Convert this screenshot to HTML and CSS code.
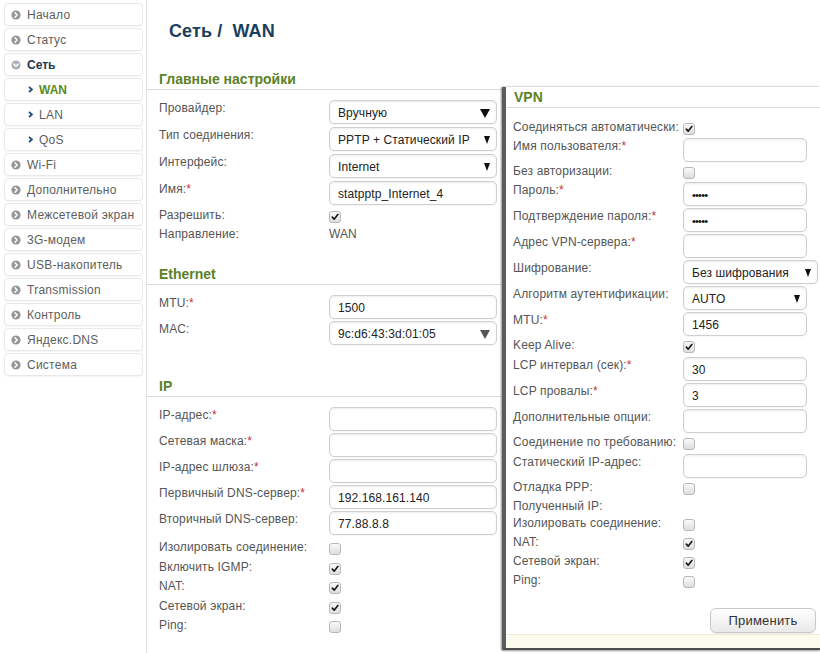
FILE: index.html
```html
<!DOCTYPE html>
<html lang="ru">
<head>
<meta charset="utf-8">
<title>Сеть / WAN</title>
<link rel="stylesheet" href="styles.css">
</head>
<body>
<div class="page">
  <nav class="sidebar">
    <div class="nav-item"><svg class="bul" viewBox="0 0 10 10"><circle cx="5" cy="5" r="4.6"/><path d="M4 2.7 6.2 5 4 7.3"/></svg><span>Начало</span></div>
    <div class="nav-item"><svg class="bul" viewBox="0 0 10 10"><circle cx="5" cy="5" r="4.6"/><path d="M4 2.7 6.2 5 4 7.3"/></svg><span>Статус</span></div>
    <div class="nav-item open"><svg class="bul" viewBox="0 0 10 10"><circle cx="5" cy="5" r="4.6"/><path d="M2.7 4 5 6.2 7.3 4"/></svg><span>Сеть</span></div>
    <div class="nav-item sub active"><svg class="chev" viewBox="0 0 5 7"><path d="M1 1 4 3.5 1 6"/></svg><span>WAN</span></div>
    <div class="nav-item sub"><svg class="chev" viewBox="0 0 5 7"><path d="M1 1 4 3.5 1 6"/></svg><span>LAN</span></div>
    <div class="nav-item sub"><svg class="chev" viewBox="0 0 5 7"><path d="M1 1 4 3.5 1 6"/></svg><span>QoS</span></div>
    <div class="nav-item"><svg class="bul" viewBox="0 0 10 10"><circle cx="5" cy="5" r="4.6"/><path d="M4 2.7 6.2 5 4 7.3"/></svg><span>Wi-Fi</span></div>
    <div class="nav-item"><svg class="bul" viewBox="0 0 10 10"><circle cx="5" cy="5" r="4.6"/><path d="M4 2.7 6.2 5 4 7.3"/></svg><span>Дополнительно</span></div>
    <div class="nav-item"><svg class="bul" viewBox="0 0 10 10"><circle cx="5" cy="5" r="4.6"/><path d="M4 2.7 6.2 5 4 7.3"/></svg><span>Межсетевой экран</span></div>
    <div class="nav-item"><svg class="bul" viewBox="0 0 10 10"><circle cx="5" cy="5" r="4.6"/><path d="M4 2.7 6.2 5 4 7.3"/></svg><span>3G-модем</span></div>
    <div class="nav-item"><svg class="bul" viewBox="0 0 10 10"><circle cx="5" cy="5" r="4.6"/><path d="M4 2.7 6.2 5 4 7.3"/></svg><span>USB-накопитель</span></div>
    <div class="nav-item"><svg class="bul" viewBox="0 0 10 10"><circle cx="5" cy="5" r="4.6"/><path d="M4 2.7 6.2 5 4 7.3"/></svg><span>Transmission</span></div>
    <div class="nav-item"><svg class="bul" viewBox="0 0 10 10"><circle cx="5" cy="5" r="4.6"/><path d="M4 2.7 6.2 5 4 7.3"/></svg><span>Контроль</span></div>
    <div class="nav-item"><svg class="bul" viewBox="0 0 10 10"><circle cx="5" cy="5" r="4.6"/><path d="M4 2.7 6.2 5 4 7.3"/></svg><span>Яндекс.DNS</span></div>
    <div class="nav-item"><svg class="bul" viewBox="0 0 10 10"><circle cx="5" cy="5" r="4.6"/><path d="M4 2.7 6.2 5 4 7.3"/></svg><span>Система</span></div>
  </nav>

  <main class="main">
    <h1 class="title">Сеть /&nbsp;&nbsp;WAN</h1>

    <section class="section sec-main">
      <h2 class="sec-head">Главные настройки</h2>
      <div class="row in"><div class="lbl">Провайдер:</div><div class="field sel"><span>Вручную</span><i class="arr big"></i></div></div>
      <div class="row in"><div class="lbl">Тип соединения:</div><div class="field sel"><span>PPTP + Статический IP</span><i class="arr"></i></div></div>
      <div class="row in"><div class="lbl">Интерфейс:</div><div class="field sel"><span>Internet</span><i class="arr"></i></div></div>
      <div class="row in"><div class="lbl">Имя:<b class="req">*</b></div><div class="field"><span>statpptp_Internet_4</span></div></div>
      <div class="row cb"><div class="lbl">Разрешить:</div><span class="check on"><svg viewBox="0 0 12 12"><path d="M2.8 6.2 5 8.6 9.4 3"/></svg></span></div>
      <div class="row cb"><div class="lbl">Направление:</div><div class="val">WAN</div></div>
    </section>

    <section class="section sec-eth">
      <h2 class="sec-head">Ethernet</h2>
      <div class="row in"><div class="lbl">MTU:<b class="req">*</b></div><div class="field"><span>1500</span></div></div>
      <div class="row in"><div class="lbl">MAC:</div><div class="field sel"><span>9c:d6:43:3d:01:05</span><i class="arr big gray"></i></div></div>
    </section>

    <section class="section sec-ip">
      <h2 class="sec-head">IP</h2>
      <div class="row in"><div class="lbl">IP-адрес:<b class="req">*</b></div><div class="field"></div></div>
      <div class="row in"><div class="lbl">Сетевая маска:<b class="req">*</b></div><div class="field"></div></div>
      <div class="row in"><div class="lbl">IP-адрес шлюза:<b class="req">*</b></div><div class="field"></div></div>
      <div class="row in"><div class="lbl">Первичный DNS-сервер:<b class="req">*</b></div><div class="field"><span>192.168.161.140</span></div></div>
      <div class="row in"><div class="lbl">Вторичный DNS-сервер:</div><div class="field"><span>77.88.8.8</span></div></div>
      <div class="cbs">
        <div class="row cb"><div class="lbl">Изолировать соединение:</div><span class="check"></span></div>
        <div class="row cb"><div class="lbl">Включить IGMP:</div><span class="check on"><svg viewBox="0 0 12 12"><path d="M2.8 6.2 5 8.6 9.4 3"/></svg></span></div>
        <div class="row cb"><div class="lbl">NAT:</div><span class="check on"><svg viewBox="0 0 12 12"><path d="M2.8 6.2 5 8.6 9.4 3"/></svg></span></div>
        <div class="row cb"><div class="lbl">Сетевой экран:</div><span class="check on"><svg viewBox="0 0 12 12"><path d="M2.8 6.2 5 8.6 9.4 3"/></svg></span></div>
        <div class="row cb"><div class="lbl">Ping:</div><span class="check"></span></div>
      </div>
    </section>
  </main>

  <aside class="vpn">
    <h2 class="sec-head vpn-head">VPN</h2>
    <div class="vpn-body">
      <div class="row cb h18"><div class="lbl">Соединяться автоматически:</div><span class="check on"><svg viewBox="0 0 12 12"><path d="M2.8 6.2 5 8.6 9.4 3"/></svg></span></div>
      <div class="row in"><div class="lbl">Имя пользователя:<b class="req">*</b></div><div class="field"></div></div>
      <div class="row cb h18"><div class="lbl">Без авторизации:</div><span class="check"></span></div>
      <div class="row in"><div class="lbl">Пароль:<b class="req">*</b></div><div class="field"><span class="dots">•••••</span></div></div>
      <div class="row in"><div class="lbl">Подтверждение пароля:<b class="req">*</b></div><div class="field"><span class="dots">•••••</span></div></div>
      <div class="row in"><div class="lbl">Адрес VPN-сервера:<b class="req">*</b></div><div class="field"></div></div>
      <div class="row in"><div class="lbl">Шифрование:</div><div class="field sel wide"><span>Без шифрования</span><i class="arr"></i></div></div>
      <div class="row in"><div class="lbl">Алгоритм аутентификации:</div><div class="field sel"><span>AUTO</span><i class="arr"></i></div></div>
      <div class="row in"><div class="lbl">MTU:<b class="req">*</b></div><div class="field"><span>1456</span></div></div>
      <div class="row cb"><div class="lbl">Keep Alive:</div><span class="check on"><svg viewBox="0 0 12 12"><path d="M2.8 6.2 5 8.6 9.4 3"/></svg></span></div>
      <div class="row in"><div class="lbl">LCP интервал (сек):<b class="req">*</b></div><div class="field"><span>30</span></div></div>
      <div class="row in"><div class="lbl">LCP провалы:<b class="req">*</b></div><div class="field"><span>3</span></div></div>
      <div class="row in"><div class="lbl">Дополнительные опции:</div><div class="field"></div></div>
      <div class="row cb"><div class="lbl">Соединение по требованию:</div><span class="check"></span></div>
      <div class="row in"><div class="lbl">Статический IP-адрес:</div><div class="field"></div></div>
      <div class="row cb"><div class="lbl">Отладка PPP:</div><span class="check"></span></div>
      <div class="row cb h17"><div class="lbl">Полученный IP:</div></div>
      <div class="row cb"><div class="lbl">Изолировать соединение:</div><span class="check"></span></div>
      <div class="row cb"><div class="lbl">NAT:</div><span class="check on"><svg viewBox="0 0 12 12"><path d="M2.8 6.2 5 8.6 9.4 3"/></svg></span></div>
      <div class="row cb"><div class="lbl">Сетевой экран:</div><span class="check on"><svg viewBox="0 0 12 12"><path d="M2.8 6.2 5 8.6 9.4 3"/></svg></span></div>
      <div class="row cb"><div class="lbl">Ping:</div><span class="check"></span></div>
    </div>
    <div class="vpn-foot"><button class="btn" type="button">Применить</button></div>
    <div class="vpn-strip"></div>
  </aside>
</div>
</body>
</html>
```

FILE: styles.css
```css
* { box-sizing: border-box; }
html, body { margin: 0; padding: 0; background: #fff; }
body {
  font-family: "Liberation Sans", Arial, sans-serif;
  font-size: 12px;
  color: #555;
  width: 820px;
  height: 653px;
  overflow: hidden;
}
.page {
  position: relative;
  display: flex;
  height: 653px;
}

/* Sidebar */
.sidebar {
  width: 147px;
  flex: none;
  border-right: 1px solid #e2e2e2;
  padding-top: 3px;
}
.nav-item {
  display: flex;
  align-items: center;
  gap: 6px;
  width: 139px;
  height: 23px;
  margin: 0 0 2px 4px;
  padding-left: 6px;
  padding-top: 1px;
  border: 1px solid #e9e9e9;
  border-radius: 4px;
  background: #fff;
  color: #5e5e5e;
  letter-spacing: 0.25px;
  box-shadow: 0 1px 1px rgba(0,0,0,0.04);
}
.bul { width: 10px; height: 10px; flex: none; margin-top: -1px; }
.bul circle { fill: #959595; }
.bul path { fill: none; stroke: #fff; stroke-width: 1.5; stroke-linecap: round; stroke-linejoin: round; }
.nav-item.open .bul circle { fill: #a9b0b8; }
.nav-item.open span { font-weight: bold; color: #1e3550; letter-spacing: 0; }
.nav-item.sub { padding-left: 23px; }
.chev { width: 5px; height: 7px; flex: none; margin-top: -1px; }
.chev path { fill: none; stroke: #1f4b78; stroke-width: 1.7; }
.nav-item.active span { font-weight: bold; color: #5a8a1e; letter-spacing: 0; }

/* Main */
.main {
  flex: 1;
  padding-left: 12px;
}
.title {
  margin: 20px 0 0 10px;
  font-size: 18px;
  line-height: 22px;
  font-weight: bold;
  color: #1c3e5e;
  letter-spacing: 0.1px;
}
.section { margin-left: -12px; }
.sec-head {
  margin: 0;
  padding: 1px 0 1px 12px;
  font-size: 14px;
  line-height: 18px;
  font-weight: bold;
  color: #5b8226;
  border-bottom: 1px solid #dcdcdc;
}
.sec-main { margin-top: 27px; }
.sec-eth { margin-top: 19px; }
.sec-ip { margin-top: 30px; }
.section > .row:first-of-type { margin-top: 9px; }
.section .row { padding-left: 12px; }

.row { display: flex; align-items: flex-start; }
.row.in { height: 26px; }
.sec-main .row.in { height: 27px; }
.row.cb { height: 19px; }
.cbs { margin-top: 3px; }
.cbs .row.cb { height: 19.5px; }
.row.h18 { height: 18px; }
.row.h17 { height: 17px; }
.lbl {
  width: 170px;
  flex: none;
  padding-top: 1px;
  line-height: 14px;
  color: #555;
  letter-spacing: 0.15px;
  white-space: nowrap;
}
.row.in .lbl { padding-top: 2px; }
.req { font-weight: normal; color: #c8323a; }
.val { line-height: 14px; padding-top: 1px; color: #555; }

.field {
  position: relative;
  display: flex;
  align-items: center;
  width: 168px;
  height: 24px;
  margin-top: 1px;
  padding-left: 8px;
  border: 1px solid #cfcfcf;
  border-radius: 5px;
  background: #fff;
  box-shadow: inset 0 1px 2px rgba(0,0,0,0.08), 0 1px 0 rgba(0,0,0,0.03);
  color: #222;
  font-size: 12px;
}
.field span { padding-top: 2px; letter-spacing: 0.1px; }
.arr {
  position: absolute;
  right: 6px;
  top: 8px;
  width: 0;
  height: 0;
  border-left: 3.5px solid transparent;
  border-right: 3.5px solid transparent;
  border-top: 8px solid #111;
}
.arr.big {
  right: 6px;
  border-left-width: 5px;
  border-right-width: 5px;
  border-top-width: 9px;
}
.arr.gray { border-top-color: #555; }
.field .dots { font-size: 11px; letter-spacing: -0.8px; color: #111; padding-top: 1px; }

.check {
  display: block;
  width: 12px;
  height: 12px;
  margin-top: 4px;
  border: 1px solid #b8b8b8;
  border-radius: 3px;
  background: linear-gradient(#fafafa, #dedede);
}
.check svg { display: block; width: 10px; height: 10px; }
.check svg path { fill: none; stroke: #1a1a1a; stroke-width: 2; stroke-linecap: round; stroke-linejoin: round; }

/* VPN overlay panel */
.vpn {
  position: absolute;
  left: 502px;
  top: 87px;
  width: 318px;
  height: 563px;
  background: #fff;
  border-left: 4px solid #5c5c5c;
  border-bottom: 2px solid #4e4e4e;
  box-shadow: -1px 0 2px rgba(0,0,0,0.35), 0 1px 2px rgba(0,0,0,0.3);
  display: flex;
  flex-direction: column;
}
.vpn-head {
  padding: 1px 0 1px 8px;
  margin-bottom: 11px;
}
.vpn-body { padding-left: 7px; }
.vpn .field { width: 124px; }
.vpn .field.wide { width: 135px; }
.vpn-foot {
  display: flex;
  justify-content: flex-end;
  padding: 17px 4px 0 0;
}
.btn {
  width: 106px;
  height: 25px;
  border: 1px solid #c8c8c8;
  border-radius: 6px;
  background: linear-gradient(#ffffff, #e9e9e9);
  font-family: "Liberation Sans", Arial, sans-serif;
  font-size: 13px;
  color: #333;
  letter-spacing: 0.2px;
  box-shadow: 0 1px 1px rgba(0,0,0,0.08);
}
.vpn-strip {
  margin-top: 1px;
  flex: 1;
  background: #fcfcee;
  border-top: 1px solid #ececdc;
}
```
